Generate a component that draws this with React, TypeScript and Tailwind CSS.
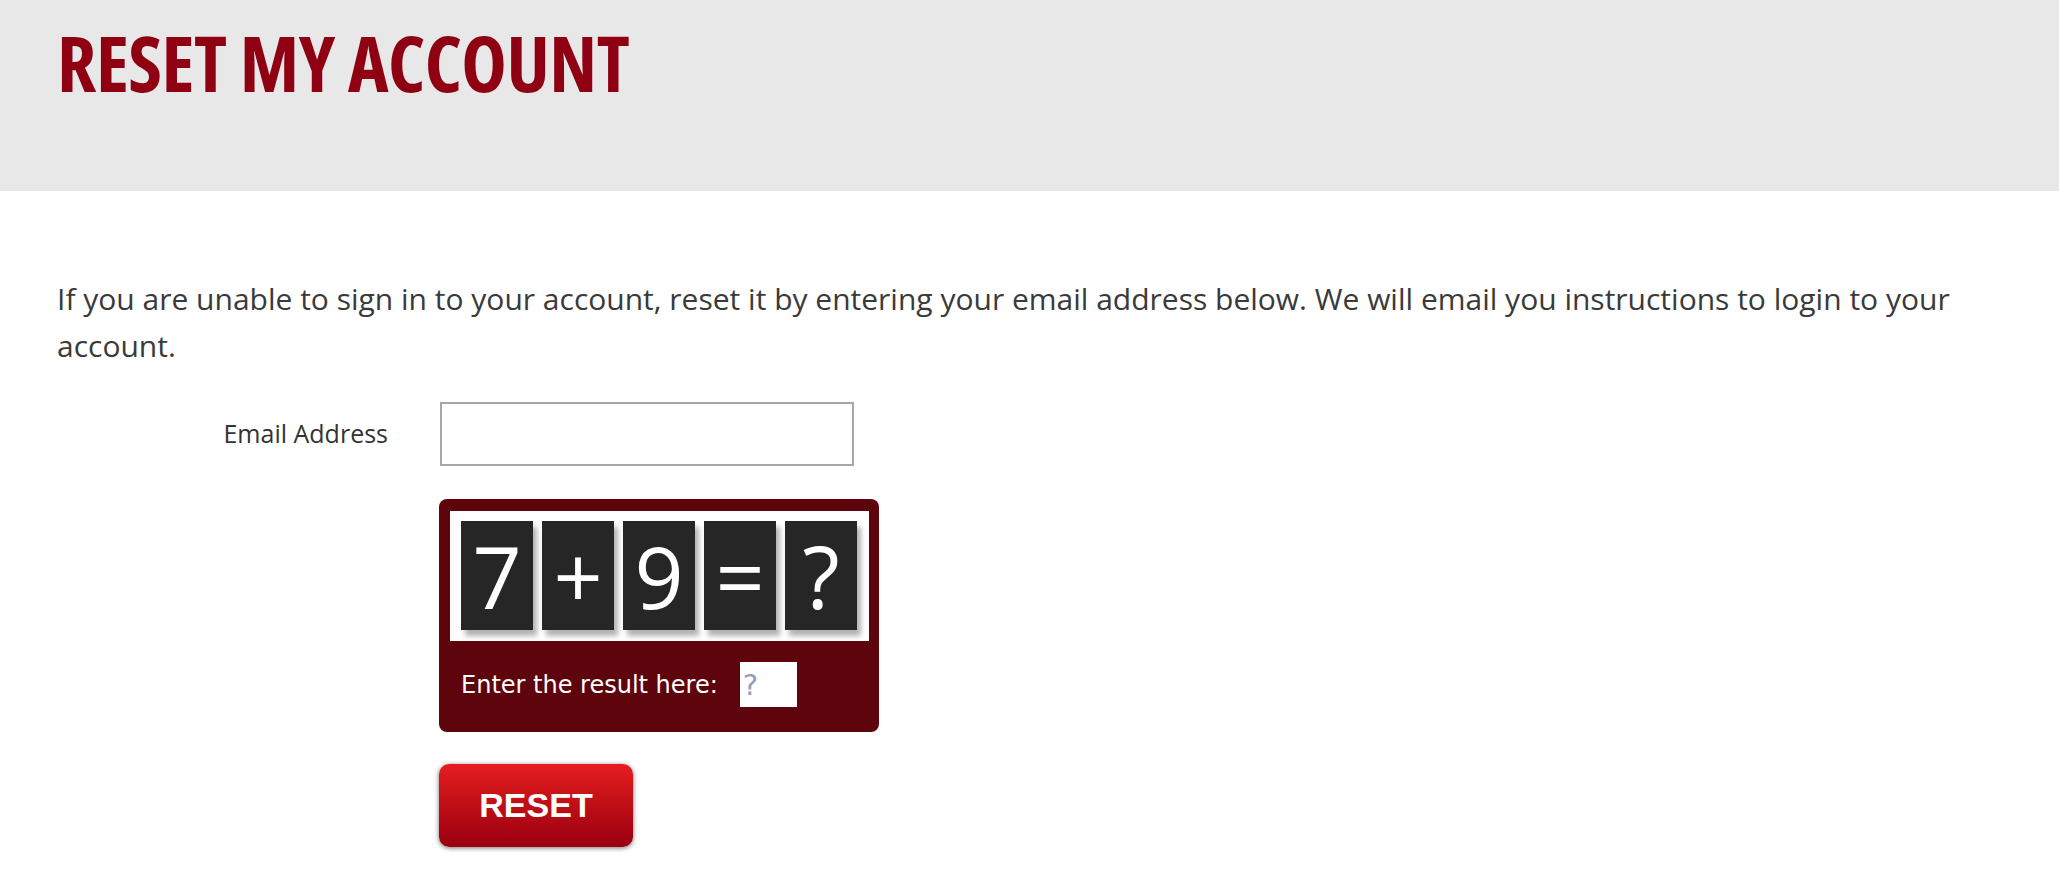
import React from 'react';

const tiles = ['7', '+', '9', '=', '?'];

const App: React.FC = () => {
  return (
    <div className="min-h-screen bg-white font-['Open_Sans',sans-serif]">
      <div className="h-[191px] bg-[#e8e8e8] pl-[57px] pt-[24px]">
        <h1 className="text-[77px] font-bold leading-none font-stretch-condensed text-[#8f0012] tracking-[-0.5px]">
          RESET MY ACCOUNT
        </h1>
      </div>

      <div className="pl-[57px] pr-[80px]">
        <p className="mt-[84px] text-[30px] leading-[47px] text-[#3a3a3a]">
          If you are unable to sign in to your account, reset it by entering your email address below. We will email you
          instructions to login to your account.
        </p>

        <div className="mt-[33px] flex items-center">
          <label className="w-[383px] pr-[52px] text-right text-[25px] text-[#333]">Email Address</label>
          <input type="text" className="h-[64px] w-[414px] border-2 border-[#a3a8aa] bg-white px-3 outline-none" />
        </div>

        <div className="ml-[382px] mt-[33px] w-[440px] rounded-[8px] bg-[#5e040c] pb-[25px] pl-[11px] pr-[10px] pt-[12px]">
          <div className="flex gap-[9px] bg-white pb-[11px] pl-[11px] pr-[12px] pt-[10px]">
            {tiles.map((t, i) => (
              <div
                key={i}
                className="flex h-[109px] w-[72px] items-center justify-center bg-[#262626] text-[86px] font-normal leading-none text-white shadow-[4px_6px_5px_rgba(0,0,0,0.3)]"
              >
                {t}
              </div>
            ))}
          </div>
          <div className="mt-[21px] flex items-center pl-[11px]">
            <span className="font-['DejaVu_Sans',sans-serif] text-[24px] text-white">Enter the result here:</span>
            <input
              type="text"
              placeholder="?"
              className="ml-[22px] h-[45px] w-[57px] bg-white px-[3px] font-['DejaVu_Sans',sans-serif] text-[29px] outline-none placeholder:text-[#8e9fbd]"
            />
          </div>
        </div>

        <button className="ml-[382px] mt-[32px] flex h-[83px] w-[194px] items-center justify-center rounded-[10px] bg-gradient-to-b from-[#e61d20] to-[#99000f] font-['Liberation_Sans',Arial,sans-serif] text-[34px] font-bold text-white shadow-[0_1px_5px_rgba(0,0,0,0.55)]">
          RESET
        </button>
      </div>
    </div>
  );
};

export default App;
